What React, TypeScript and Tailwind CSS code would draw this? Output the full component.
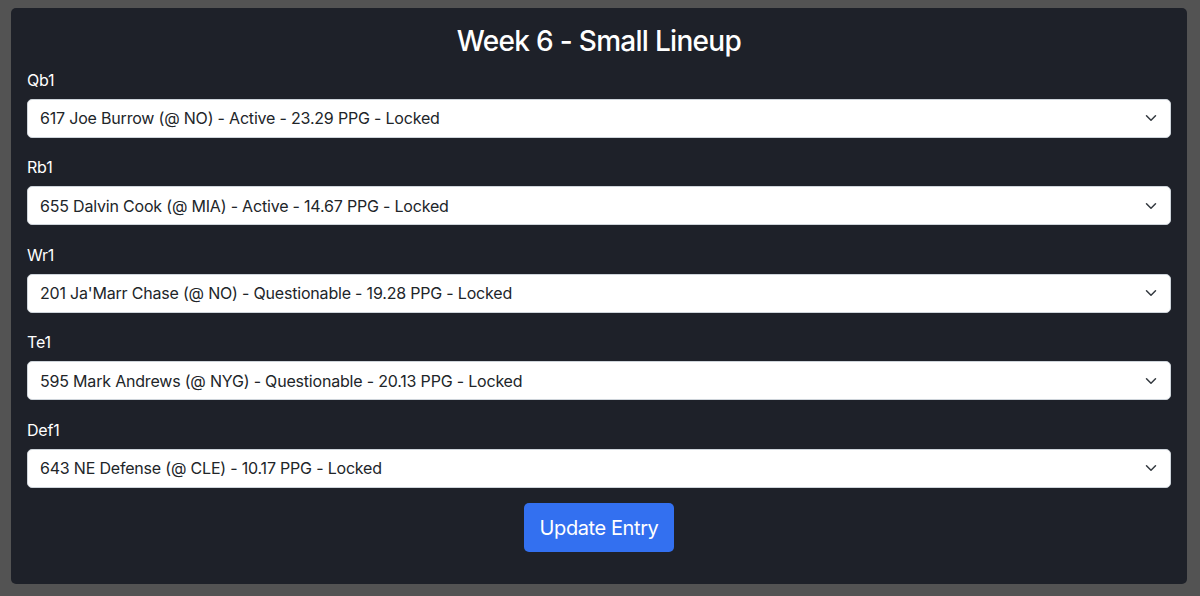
const slots = [
  { label: "Qb1", value: "617 Joe Burrow (@ NO) - Active - 23.29 PPG - Locked" },
  { label: "Rb1", value: "655 Dalvin Cook (@ MIA) - Active - 14.67 PPG - Locked" },
  { label: "Wr1", value: "201 Ja'Marr Chase (@ NO) - Questionable - 19.28 PPG - Locked" },
  { label: "Te1", value: "595 Mark Andrews (@ NYG) - Questionable - 20.13 PPG - Locked" },
  { label: "Def1", value: "643 NE Defense (@ CLE) - 10.17 PPG - Locked" },
];

function Chevron() {
  return (
    <svg width="16" height="12" viewBox="0 0 16 16" className="absolute right-3 top-1/2 -translate-y-1/2 pointer-events-none">
      <path d="m2 5 6 6 6-6" fill="none" stroke="#343a40" strokeWidth="2" strokeLinecap="round" strokeLinejoin="round" />
    </svg>
  );
}

export default function App() {
  return (
    <div className="h-[596px] bg-[#535353] pt-2 pl-[11px] pr-[13px] font-['Inter','Helvetica_Neue',sans-serif]">
      <div className="bg-[#1e2129] rounded-[5px] h-[576px] px-4 pt-[17px] text-white">
        <h3 className="text-[28px] font-medium leading-[1.2] tracking-[-0.025em] text-center mb-[9px]">Week 6 - Small Lineup</h3>
        {slots.map((s, i) => (
          <div key={s.label} className={i === slots.length - 1 ? "mb-[15.5px]" : "mb-[17.5px]"}>
            <label className="block text-base leading-6 tracking-[-0.012em] mb-[7px]">{s.label}</label>
            <div className="relative">
              <div className="h-[39px] bg-white rounded-[5px] border border-[#ced4da] pl-3 pr-9 flex items-center text-base tracking-[-0.012em] text-[#212529]">
                {s.value}
              </div>
              <Chevron />
            </div>
          </div>
        ))}
        <div className="flex justify-center">
          <button className="bg-[#3370f0] text-white text-xl leading-[1.5] tracking-[-0.02em] px-4 h-[49px] rounded-[5px]">Update Entry</button>
        </div>
      </div>
    </div>
  );
}
